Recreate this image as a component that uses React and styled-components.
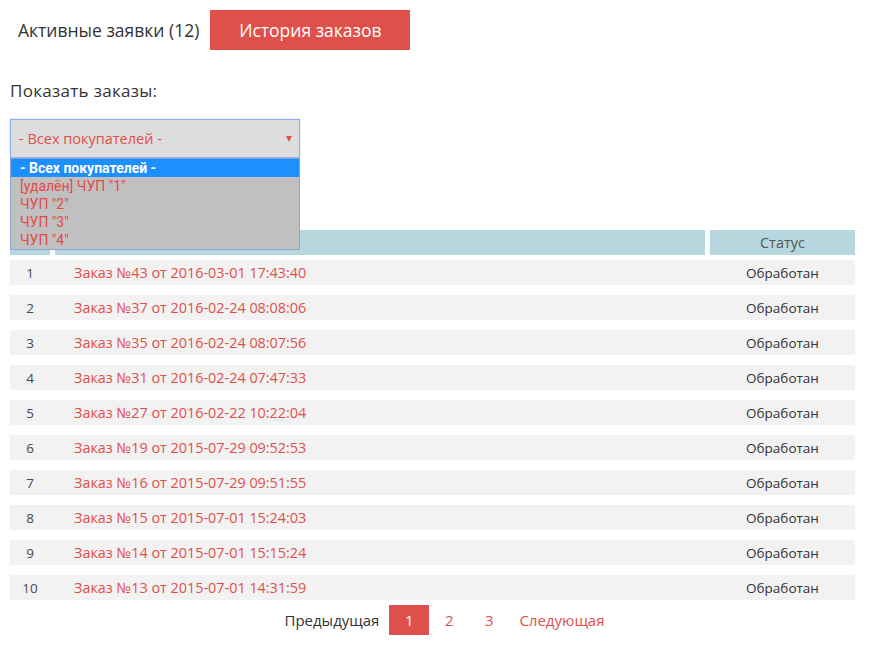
import React from "react";
import styled, { createGlobalStyle } from "styled-components";

const Global = createGlobalStyle`
  html, body { margin: 0; padding: 0; background: #fff; }
  body { font-family: "Open Sans", "Noto Sans", sans-serif; color: #333; }
  * { box-sizing: border-box; }
`;

const RED = "#e0504a";

const Page = styled.div`
  width: 870px;
  padding: 10px 15px 20px 10px;
`;

const Tabs = styled.div`
  display: flex;
  align-items: stretch;
  height: 40px;
`;

const Tab = styled.div`
  display: flex;
  align-items: center;
  justify-content: center;
  font-size: 17.5px;
  padding: ${(p) => (p.$active ? "0" : "0 11px 0 8px")};
  width: ${(p) => (p.$w ? p.$w + "px" : "auto")};
  background: ${(p) => (p.$active ? RED : "transparent")};
  color: ${(p) => (p.$active ? "#fff" : "#333")};
`;

const Label = styled.div`
  margin-top: 30px;
  font-size: 17px;
  line-height: 22px;
  letter-spacing: 0.3px;
`;

const SelectWrap = styled.div`
  position: relative;
  width: 290px;
  margin-top: 17px;
`;

const SelectBox = styled.div`
  height: 39px;
  background: #dddddd;
  border: 1px solid #8cb0ea;
  box-shadow: 0 0 1px #8cb0ea;
  display: flex;
  align-items: center;
  justify-content: space-between;
  padding: 0 7px 0 8px;
  color: ${RED};
  font-size: 14.5px;
`;

const Arrow = styled.span`
  width: 0;
  height: 0;
  border-left: 3px solid transparent;
  border-right: 3px solid transparent;
  border-top: 6px solid ${RED};
`;

const OptionList = styled.div`
  position: absolute;
  left: 0;
  top: 39px;
  width: 290px;
  background: #c0c0c0;
  border: 1px solid #86a3d8;
  z-index: 5;
  font-family: "Roboto", "Liberation Sans", sans-serif;
  font-size: 14px;
`;

const Option = styled.div`
  height: 18px;
  line-height: 18px;
  padding-left: 9px;
  color: ${(p) => (p.$selected ? "#fff" : "#e04a46")};
  background: ${(p) => (p.$selected ? "#1e8fff" : "transparent")};
  font-weight: ${(p) => (p.$selected ? 700 : 400)};
`;

const Table = styled.div`
  margin-top: 72px;
  width: 845px;
  display: flex;
  flex-direction: column;
  gap: 10px;
`;

const Grid = styled.div`
  display: grid;
  grid-template-columns: 40px 1fr 145px;
  column-gap: 5px;
  height: 25px;
  align-items: stretch;
  background: ${(p) => (p.$head ? "transparent" : "#f2f2f2")};
  margin-bottom: ${(p) => (p.$head ? "-5px" : "0")};
  font-size: 14.4px;
`;

const HeadCell = styled.div`
  background: #b7d7df;
  color: #555;
  display: flex;
  align-items: center;
  justify-content: center;
  font-size: 14.5px;
`;

const Cell = styled.div`
  display: flex;
  align-items: center;
  justify-content: ${(p) => (p.$left ? "flex-start" : "center")};
  padding-left: ${(p) => (p.$left ? "19px" : "0")};
  color: ${(p) => (p.$red ? RED : p.$muted ? "#444a5a" : "#333")};
  font-size: ${(p) => (p.$left ? "14.4px" : "13.5px")};
`;

const Pager = styled.div`
  display: flex;
  justify-content: center;
  margin-top: 5px;
  padding-left: 24px;
  height: 30px;
  width: 845px;
  font-size: 15px;
`;

const PageItem = styled.div`
  min-width: 40px;
  padding: 0 10px;
  display: flex;
  align-items: center;
  justify-content: center;
  background: ${(p) => (p.$active ? RED : "transparent")};
  color: ${(p) => (p.$active ? "#fff" : p.$plain ? "#333" : RED)};
`;

const orders = [
  ["43", "2016-03-01 17:43:40"],
  ["37", "2016-02-24 08:08:06"],
  ["35", "2016-02-24 08:07:56"],
  ["31", "2016-02-24 07:47:33"],
  ["27", "2016-02-22 10:22:04"],
  ["19", "2015-07-29 09:52:53"],
  ["16", "2015-07-29 09:51:55"],
  ["15", "2015-07-01 15:24:03"],
  ["14", "2015-07-01 15:15:24"],
  ["13", "2015-07-01 14:31:59"],
];

const options = [
  "- Всех покупателей -",
  "[удалён] ЧУП \"1\"",
  "ЧУП \"2\"",
  "ЧУП \"3\"",
  "ЧУП \"4\"",
];

export default function App() {
  return (
    <Page>
      <Global />
      <Tabs>
        <Tab>Активные заявки (12)</Tab>
        <Tab $active $w={200}>История заказов</Tab>
      </Tabs>
      <Label>Показать заказы:</Label>
      <SelectWrap>
        <SelectBox>
          <span>- Всех покупателей -</span>
          <Arrow />
        </SelectBox>
        <OptionList>
          {options.map((o, i) => (
            <Option key={o} $selected={i === 0}>{o}</Option>
          ))}
        </OptionList>
      </SelectWrap>
      <Table>
        <Grid $head>
          <HeadCell />
          <HeadCell />
          <HeadCell>Статус</HeadCell>
        </Grid>
        {orders.map(([n, d], i) => (
          <Grid key={n}>
            <Cell $muted>{i + 1}</Cell>
            <Cell $left $red>Заказ №{n} от {d}</Cell>
            <Cell>Обработан</Cell>
          </Grid>
        ))}
      </Table>
      <Pager>
        <PageItem $plain>Предыдущая</PageItem>
        <PageItem $active>1</PageItem>
        <PageItem>2</PageItem>
        <PageItem>3</PageItem>
        <PageItem>Следующая</PageItem>
      </Pager>
    </Page>
  );
}
